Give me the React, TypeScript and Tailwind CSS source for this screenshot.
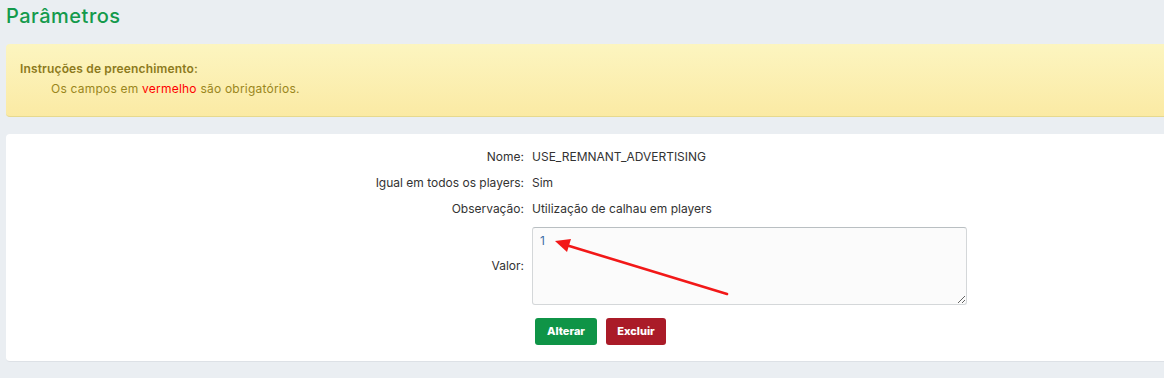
const font = { fontFamily: "Inter, 'Noto Sans', sans-serif" };

function InfoRow({ label, children }: { label: string; children: React.ReactNode }) {
  return (
    <div className="flex items-center py-[4px] leading-[18px]">
      <div className="w-[526px] shrink-0 pr-2 text-right text-[12px] text-[#333]">{label}</div>
      <div className="text-[12px] text-[#333]">{children}</div>
    </div>
  );
}

export default function App() {
  return (
    <div className="relative min-h-[378px] w-[1164px] overflow-hidden bg-[#eaeef2]" style={font}>
      <h1 className="pl-[6px] pt-[3px] text-[20px] leading-[26px] font-medium tracking-[0.5px] text-[#149a4c]">Parâmetros</h1>

      <div className="ml-[6px] mt-[15px] h-[73px] w-[1170px] rounded-l-[4px] border-b border-[#e6d98f] bg-gradient-to-b from-[#fcf5c0] to-[#fbeaa4] pl-[14px] pt-[17px]">
        <p className="text-[12px] leading-[16px] font-semibold tracking-[0.15px] text-[#8c7a1c]">Instruções de preenchimento:</p>
        <p className="mt-[4px] pl-[31px] text-[12px] leading-[16px] tracking-[0.22px] text-[#9a861c]">
          Os campos em <span className="text-[#f00]">vermelho</span> são obrigatórios.
        </p>
      </div>

      <div className="ml-[6px] mt-[17px] h-[228px] w-[1170px] rounded-l-[4px] border-b border-[#dde1e6] bg-white pt-[10px]">
        <InfoRow label="Nome:">USE_REMNANT_ADVERTISING</InfoRow>
        <InfoRow label="Igual em todos os players:">Sim</InfoRow>
        <InfoRow label="Observação:">Utilização de calhau em players</InfoRow>
        <div className="mt-[5px] flex items-center">
          <div className="w-[526px] shrink-0 pr-2 text-right text-[12px] text-[#333]">Valor:</div>
          <textarea
            defaultValue="1"
            className="h-[78px] w-[435px] rounded-[3px] border border-[#d4d7d9] border-t-[#b9bfc2] bg-[#fbfbfb] px-[7px] py-[4px] text-[12px] leading-[18px] text-[#3d6fa8] outline-none"
            style={font}
          />
        </div>
        <div className="ml-[529px] mt-[13px] flex gap-[9px]">
          <button className="h-[27px] w-[62px] rounded-[3px] bg-[#0f9447] text-[11px] font-extrabold text-white">Alterar</button>
          <button className="h-[27px] w-[60px] rounded-[3px] bg-[#aa1b28] text-[11px] font-extrabold text-white">Excluir</button>
        </div>
      </div>

      <svg className="pointer-events-none absolute left-0 top-0" width="1164" height="378">
        <line x1="727" y1="294" x2="566" y2="245" stroke="#f21818" strokeWidth="2.6" strokeLinecap="round" />
        <polygon points="555,241 571,239 567,252" fill="#f21818" />
      </svg>
    </div>
  );
}
